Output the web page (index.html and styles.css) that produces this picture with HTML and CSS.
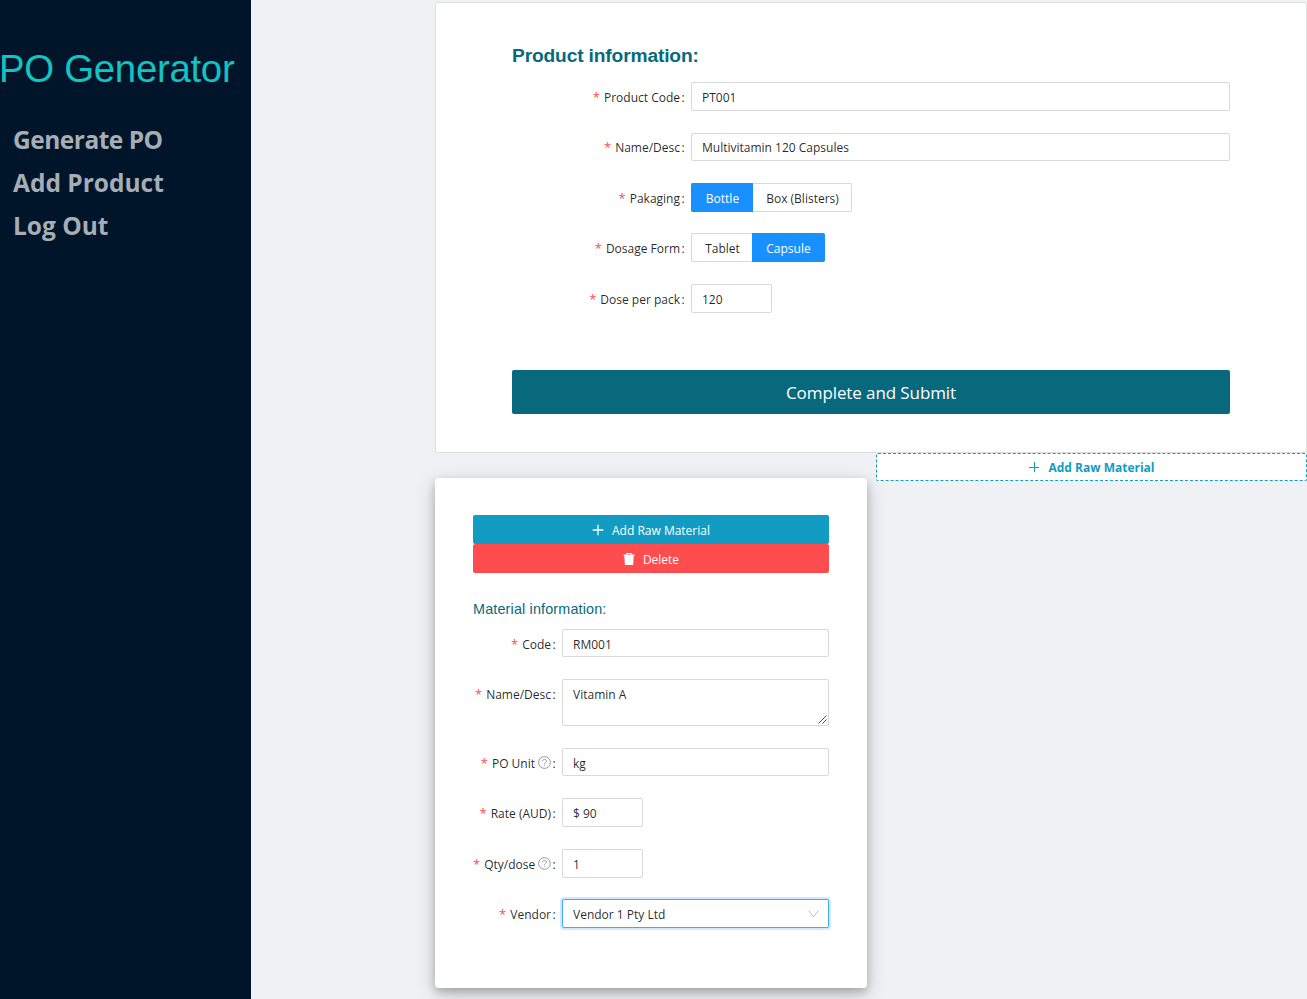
FILE: index.html
```
<!DOCTYPE html>
<html lang="en">
<head>
<meta charset="utf-8">
<title>PO Generator</title>
<link rel="stylesheet" href="styles.css">
</head>
<body>
<div class="app">
  <aside class="sidebar">
    <div class="brand">PO Generator</div>
    <nav class="menu">
      <a class="menu-item">Generate PO</a>
      <a class="menu-item wide">Add Product</a>
      <a class="menu-item wide">Log Out</a>
    </nav>
  </aside>
  <main class="content">
    <section class="product-card">
      <h2 class="product-title">Product information:</h2>
      <div class="product-form">
        <div class="row plus"><label class="label"><i class="star">*</i><span>Product Code</span><b class="colon">:</b></label><div class="input">PT001</div></div>
        <div class="row raised"><label class="label"><i class="star">*</i><span>Name/Desc</span><b class="colon">:</b></label><div class="input short">Multivitamin 120 Capsules</div></div>
        <div class="row"><label class="label"><i class="star">*</i><span>Pakaging</span><b class="colon">:</b></label>
          <div class="radios"><span class="radio on w-bottle">Bottle</span><span class="radio w-box">Box (Blisters)</span></div></div>
        <div class="row plus"><label class="label"><i class="star">*</i><span>Dosage Form</span><b class="colon">:</b></label>
          <div class="radios"><span class="radio w-tablet">Tablet</span><span class="radio on w-capsule">Capsule</span></div></div>
        <div class="row"><label class="label"><i class="star">*</i><span>Dose per pack</span><b class="colon">:</b></label><div class="input number">120</div></div>
      </div>
      <div class="submit">Complete and Submit</div>
    </section>
    <div class="lower">
      <section class="material-card">
        <div class="btn add"><svg class="icon" viewBox="0 0 12 12"><path d="M6 .7v10.6M.7 6h10.6" stroke="currentColor" stroke-width="1.3"/></svg><span>Add Raw Material</span></div>
        <div class="btn delete"><svg class="icon" viewBox="0 0 12 12"><path d="M3.2 0h5.6v1.6h2.6v1.5H.6V1.6h2.6zM4.2 1v.6h3.6V1zM1.3 3.1h9.4l-.6 8.9H1.9z" fill="currentColor" fill-rule="evenodd"/></svg><span>Delete</span></div>
        <h3 class="material-title">Material information:</h3>
        <div class="material-form">
          <div class="row"><label class="label"><i class="star">*</i><span>Code</span><b class="colon">:</b></label><div class="input short">RM001</div></div>
          <div class="row tall"><label class="label"><i class="star">*</i><span>Name/Desc</span><b class="colon">:</b></label><div class="input area">Vitamin A<svg class="grip" viewBox="0 0 9 9"><path d="M.5 8.5l8-8M4.5 8.5l4-4" stroke="#555" fill="none"/></svg></div></div>
          <div class="row"><label class="label"><i class="star">*</i><span>PO Unit</span><svg class="help" viewBox="0 0 13 13"><circle cx="6.5" cy="6.5" r="5.9"/><path d="M4.6 5.2c0-2.5 3.9-2.4 3.9-.1 0 1.5-2 1.4-2 2.8M6.5 8.8v1"/></svg><b class="colon">:</b></label><div class="input short">kg</div></div>
          <div class="row plus"><label class="label"><i class="star">*</i><span>Rate (AUD)</span><b class="colon">:</b></label><div class="input number">$ 90</div></div>
          <div class="row"><label class="label"><i class="star">*</i><span>Qty/dose</span><svg class="help" viewBox="0 0 13 13"><circle cx="6.5" cy="6.5" r="5.9"/><path d="M4.6 5.2c0-2.5 3.9-2.4 3.9-.1 0 1.5-2 1.4-2 2.8M6.5 8.8v1"/></svg><b class="colon">:</b></label><div class="input number">1</div></div>
          <div class="row"><label class="label"><i class="star">*</i><span>Vendor</span><b class="colon">:</b></label><div class="input select"><span>Vendor 1 Pty Ltd</span><svg class="arrow" viewBox="0 0 11 8"><path d="M.8 .7l4.7 6.2L10.2 .7" stroke="#bfbfbf" fill="none"/></svg></div></div>
        </div>
      </section>
      <div class="dashed"><svg class="icon" viewBox="0 0 12 12"><path d="M6.5 1v10M1 6.5h10" stroke="currentColor" stroke-width="1"/></svg><span>Add Raw Material</span></div>
    </div>
  </main>
</div>
</body>
</html>
```
FILE: styles.css
```
* { box-sizing: border-box; }
body { margin: 0; background: #f0f2f5; font-family: "Open Sans", "Noto Sans", sans-serif; font-size: 12px; color: rgba(0,0,0,.85); }
.app { display: flex; width: 1307px; height: 999px; overflow: hidden; background: #eff1f5; }
.sidebar { width: 251px; flex: none; background: #001529; }
.brand { padding-top: 46px; font: 38.4px/46px "Liberation Sans", Arial, sans-serif; color: #13c2c2; white-space: nowrap; letter-spacing: -.3px; margin-left: -1px; }
.menu { display: flex; flex-direction: column; padding: 26px 0 0 13px; }
.menu-item { height: 43px; line-height: 43px; font-size: 24.5px; font-weight: 700; color: #a6adb4; letter-spacing: -.5px; white-space: nowrap; }
.menu-item.wide { letter-spacing: 0; }
.content { width: 872px; margin-left: 184px; flex: none; }
.product-card { margin-top: 2px; height: 451px; padding: 41px 76px 0; background: #fff; border: 1px solid #dcdee1; border-radius: 3px; }
.product-title { margin: 0; font: 700 19.2px/24px "Liberation Sans", Arial, sans-serif; color: #08697c; letter-spacing: -.15px; }
.product-form { padding-top: 14px; }
.row { display: flex; align-items: flex-start; height: 50px; }
.row.plus { height: 51px; }
.row.tall { height: 69px; }
.label { display: flex; flex: none; justify-content: flex-end; align-items: center; height: 30px; padding-right: 5.5px; white-space: nowrap; letter-spacing: 0; }
.product-form .label { width: 179px; }
.raised .label { height: 28px; }
.star { color: #ff4d4f; font-style: normal; font-size: 13px; margin-right: 4px; }
.colon { font-weight: 400; margin-left: 1.5px; width: 4px; }
.input { flex: 1; height: 29px; line-height: 29px; padding-left: 10px; border: 1px solid #d9d9d9; border-radius: 2px; background: #fff; white-space: nowrap; }
.input.short { height: 28px; }
.raised .input { line-height: 27px; }
.input.number { flex: none; width: 81px; }
.radios { display: flex; height: 29px; }
.radio { border: 1px solid #d9d9d9; line-height: 29px; text-align: center; white-space: nowrap; }
.radio:first-child { border-radius: 2px 0 0 2px; border-right: 0; }
.radio:last-child { border-radius: 0 2px 2px 0; border-left: 0; padding-left: 1px; }
.radio.on { background: #1890ff; border-color: #1890ff; color: #fff; }
.w-bottle { width: 62px; }
.w-box { width: 99px; }
.w-tablet { width: 61px; padding-left: 1px; }
.w-capsule { width: 73px; }
.submit { margin-top: 36px; height: 44px; line-height: 45px; border-radius: 2px; background: #08697c; color: #fff; text-align: center; font-size: 17px; letter-spacing: -.1px; }
.lower { display: flex; justify-content: space-between; align-items: flex-start; }
.material-card { width: 432px; height: 510px; margin-top: 25px; padding: 37px 38px 0; background: #fff; border-radius: 4px; box-shadow: 0 4px 8px rgba(0,0,0,.2), 0 6px 20px rgba(0,0,0,.19); }
.btn, .dashed { display: flex; align-items: center; justify-content: center; gap: 8px; height: 29px; color: #fff; border-radius: 2px; }
.btn { padding-top: 1px; }
.icon { width: 12px; height: 12px; fill: none; }
.add { background: #139cc3; }
.delete { background: #ff4d4f; }
.material-title { margin: 26px 0 0; height: 30px; font: 400 14.4px/21px "Liberation Sans", Arial, sans-serif; color: #08697c; letter-spacing: .15px; }
.material-form .label { width: 89px; }
.area { position: relative; height: 47px; }
.grip { position: absolute; right: 1px; bottom: 1px; width: 9px; height: 9px; }
.help { width: 13px; height: 13px; margin: -2px 0 0 3px; fill: none; stroke: #999; stroke-width: 1; }
.select { display: flex; justify-content: space-between; align-items: center; padding-right: 9px; border-color: #40a9ff; box-shadow: 0 0 0 2px rgba(24,144,255,.2); }
.select span { padding-top: 2px; }
.arrow { width: 11px; height: 8px; }
.dashed { width: 431px; height: 28px; border: 1px dashed #139cc3; background: #fff; color: #139cc3; font-weight: 700; }
```
